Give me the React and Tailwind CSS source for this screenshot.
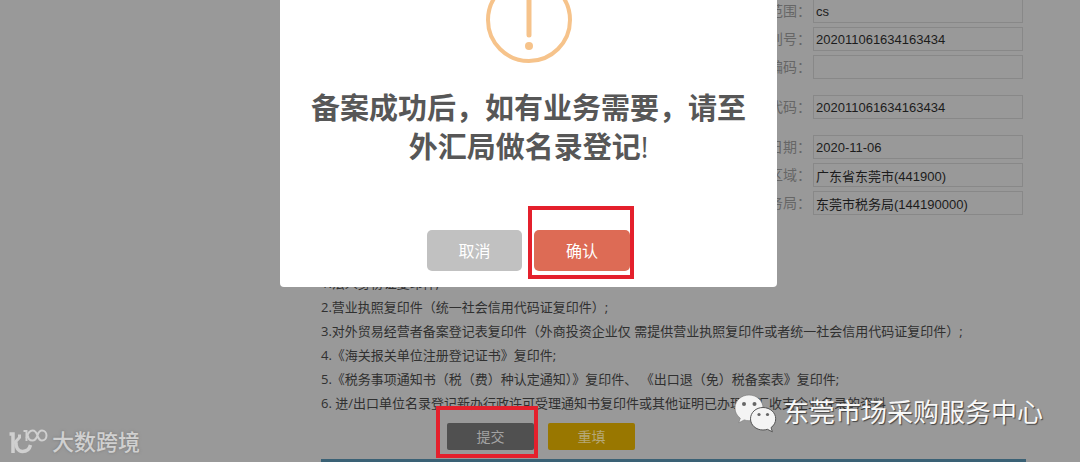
import React from 'react'

const groups = [
  [
    { id: 'scope', label: '经营范围', value: 'cs' },
    { id: 'taxNo', label: '识别号', value: '202011061634163434' },
    { id: 'code', label: '编码', value: '' },
  ],
  [{ id: 'creditCode', label: '代码', value: '202011061634163434' }],
  [
    { id: 'date', label: '日期', value: '2020-11-06' },
    { id: 'area', label: '区域', value: '广东省东莞市(441900)' },
    { id: 'taxOffice', label: '税务局', value: '东莞市税务局(144190000)' },
  ],
]

const materials = [
  '1.法人身份证复印件;',
  '2.营业执照复印件（统一社会信用代码证复印件）;',
  '3.对外贸易经营者备案登记表复印件（外商投资企业仅 需提供营业执照复印件或者统一社会信用代码证复印件）;',
  '4.《海关报关单位注册登记证书》复印件;',
  '5.《税务事项通知书（税（费）种认定通知）》复印件、 《出口退（免）税备案表》复印件;',
  '6. 进/出口单位名录登记新办行政许可受理通知书复印件或其他证明已办理外汇收支企业名录的资料',
]

const Field = ({ id, label, value }) => (
  <div className="flex items-center justify-end gap-0.5">
    <label htmlFor={id} lang="zh-CN" className="text-sm leading-6 text-[#666]">{label}：</label>
    <input
      id={id}
      type="text"
      defaultValue={value}
      className="h-6 w-[210px] border border-[#888] bg-transparent px-0.5 text-[13px] text-[#1c1c1c] outline-none"
    />
  </div>
)

const Highlight = ({ className }) => (
  <span className={`pointer-events-none absolute border-4 border-[#e4202c] ${className}`} />
)

const Dialog = () => (
  <div
    role="dialog"
    aria-labelledby="dialogTitle"
    className="absolute top-0 left-[280px] flex w-[497px] flex-col items-center rounded-b bg-white px-6 pb-4 font-['Open_Sans','Noto_Sans_CJK_SC',sans-serif]"
  >
    <svg width="88" height="64" viewBox="0 0 88 64" aria-hidden="true">
      <circle cx="44" cy="20" r="41" fill="none" stroke="#f6c38b" strokeWidth="4" />
      <path d="M44 -10V35" stroke="#f6c38b" strokeWidth="5" strokeLinecap="round" />
      <circle cx="44" cy="46" r="4" fill="#f6c38b" />
    </svg>
    <h2 id="dialogTitle" className="mt-6 text-center text-[29px] leading-[39px] font-bold text-[#575757]">
      备案成功后，如有业务需要，请至外汇局做名录登记<span className="font-normal">!</span>
    </h2>
    <div className="mt-16 flex gap-3">
      <button type="button" className="h-[41px] w-[95px] rounded-[5px] bg-[#c1c1c1] text-base text-white">取消</button>
      <div className="relative">
        <button type="button" className="h-[41px] w-24 rounded-[5px] bg-[#dd6b55] text-base text-white">确认</button>
        <Highlight className="-top-6 -right-1 -bottom-2 -left-1.5" />
      </div>
    </div>
  </div>
)

const WechatMark = () => (
  <div className="absolute top-[393px] left-[734px] flex items-center gap-1.5">
    <svg width="43" height="40" viewBox="0 0 43 40" aria-hidden="true">
      <path
        d="M15 2C7.500 2 1 7.500 1 15c0 4.300 2 7.700 5.300 10.200l-1.500 4.600 5.400-2.900c1.600.5 3.200.8 4.800.8 8 0 14-5.700 14-12.700S23 2 15 2z"
        fill="#f4f4f4" stroke="#777" strokeWidth="0.6"
      />
      <path
        d="M29 14.500c-7 0-12.500 5-12.500 11.300S22 37 29 37c1.600 0 3-.2 4.400-.7l5 2.500-1.400-4.200c3-2 4.700-5.200 4.700-8.800C41.700 19.500 36 14.500 29 14.500z"
        fill="#f4f4f4" stroke="#555" strokeWidth="1"
      />
      <circle cx="10" cy="11" r="2" fill="#666" />
      <circle cx="20.500" cy="11" r="2" fill="#666" />
      <circle cx="25" cy="21.500" r="1.600" fill="#666" />
      <circle cx="33.500" cy="21.500" r="1.600" fill="#666" />
    </svg>
    <span className="text-[26px] leading-10 whitespace-nowrap text-[#f8f8f8] [text-shadow:1px_1px_1px_#444]">
      东莞市场采购服务中心
    </span>
  </div>
)

const SiteMark = () => (
  <div className="absolute top-[427px] left-2 flex items-center gap-1">
    <svg width="40" height="30" viewBox="0 0 40 30" fill="none" stroke="#d0d0d0" aria-hidden="true">
      <path d="M1.500 6H5V25" strokeWidth="3.500" />
      <path d="M11.500 6.500V9.500L6 15.500" strokeWidth="3" />
      <path d="M8 14C7.500 19 10 23.500 14.500 23.500C19 23.500 21.500 21 22.500 17" strokeWidth="3.500" />
      <path d="M15.500 3H18.500V13" strokeWidth="2" />
      <path d="M18.500 10C20 4.500 22 2.500 24.500 2.500C31 2.500 28 12.500 34 12.500C36.500 12.500 38.500 10.500 38.500 7.500S36.500 2.500 34 2.500C28 2.500 31 12.500 24.500 12.500C22 12.500 20 11 20 7.500" strokeWidth="2" />
    </svg>
    <span className="text-[22px] leading-8 font-medium whitespace-nowrap text-[#d0d0d0] [text-shadow:0_0_3px_#777]">
      大数跨境
    </span>
  </div>
)

const App = () => {
  return (
    <div className="relative overflow-hidden bg-[#999] font-['Liberation_Sans','Noto_Sans_CJK_SC',sans-serif]">
      <main className="mr-[54px] ml-[321px]">
        <form onSubmit={(e) => e.preventDefault()}>
          {/* record fields */}
          <div className="-mt-px flex flex-col gap-4 pr-[3px]">
            {groups.map((fields) => (
              <div key={fields[0].id} className="flex flex-col gap-1">
                {fields.map((f) => <Field key={f.id} {...f} />)}
              </div>
            ))}
          </div>

          {/* required materials */}
          <ul className="mt-14 font-['Open_Sans','Noto_Sans_CJK_SC',sans-serif] text-[13px] leading-6 whitespace-nowrap text-[#303030]">
            {materials.map((m) => <li key={m}>{m}</li>)}
          </ul>

          <div className="mt-2 mb-[9px] ml-[126px] flex gap-3.5 text-sm">
            <div className="relative">
              <button type="submit" className="block h-[27px] w-[87px] rounded-xs bg-[#505050] text-[#a3a3a3]">提交</button>
              <Highlight className="-top-[17px] -right-1 -bottom-2 -left-[11px]" />
            </div>
            <button type="reset" className="h-[27px] w-[87px] rounded-xs bg-[#997700] text-[#b5a878]">重填</button>
          </div>
        </form>
        <div className="h-[3px] bg-[#3a6175]" />
      </main>

      <Dialog />
      <WechatMark />
      <SiteMark />
    </div>
  )
}

export default App
